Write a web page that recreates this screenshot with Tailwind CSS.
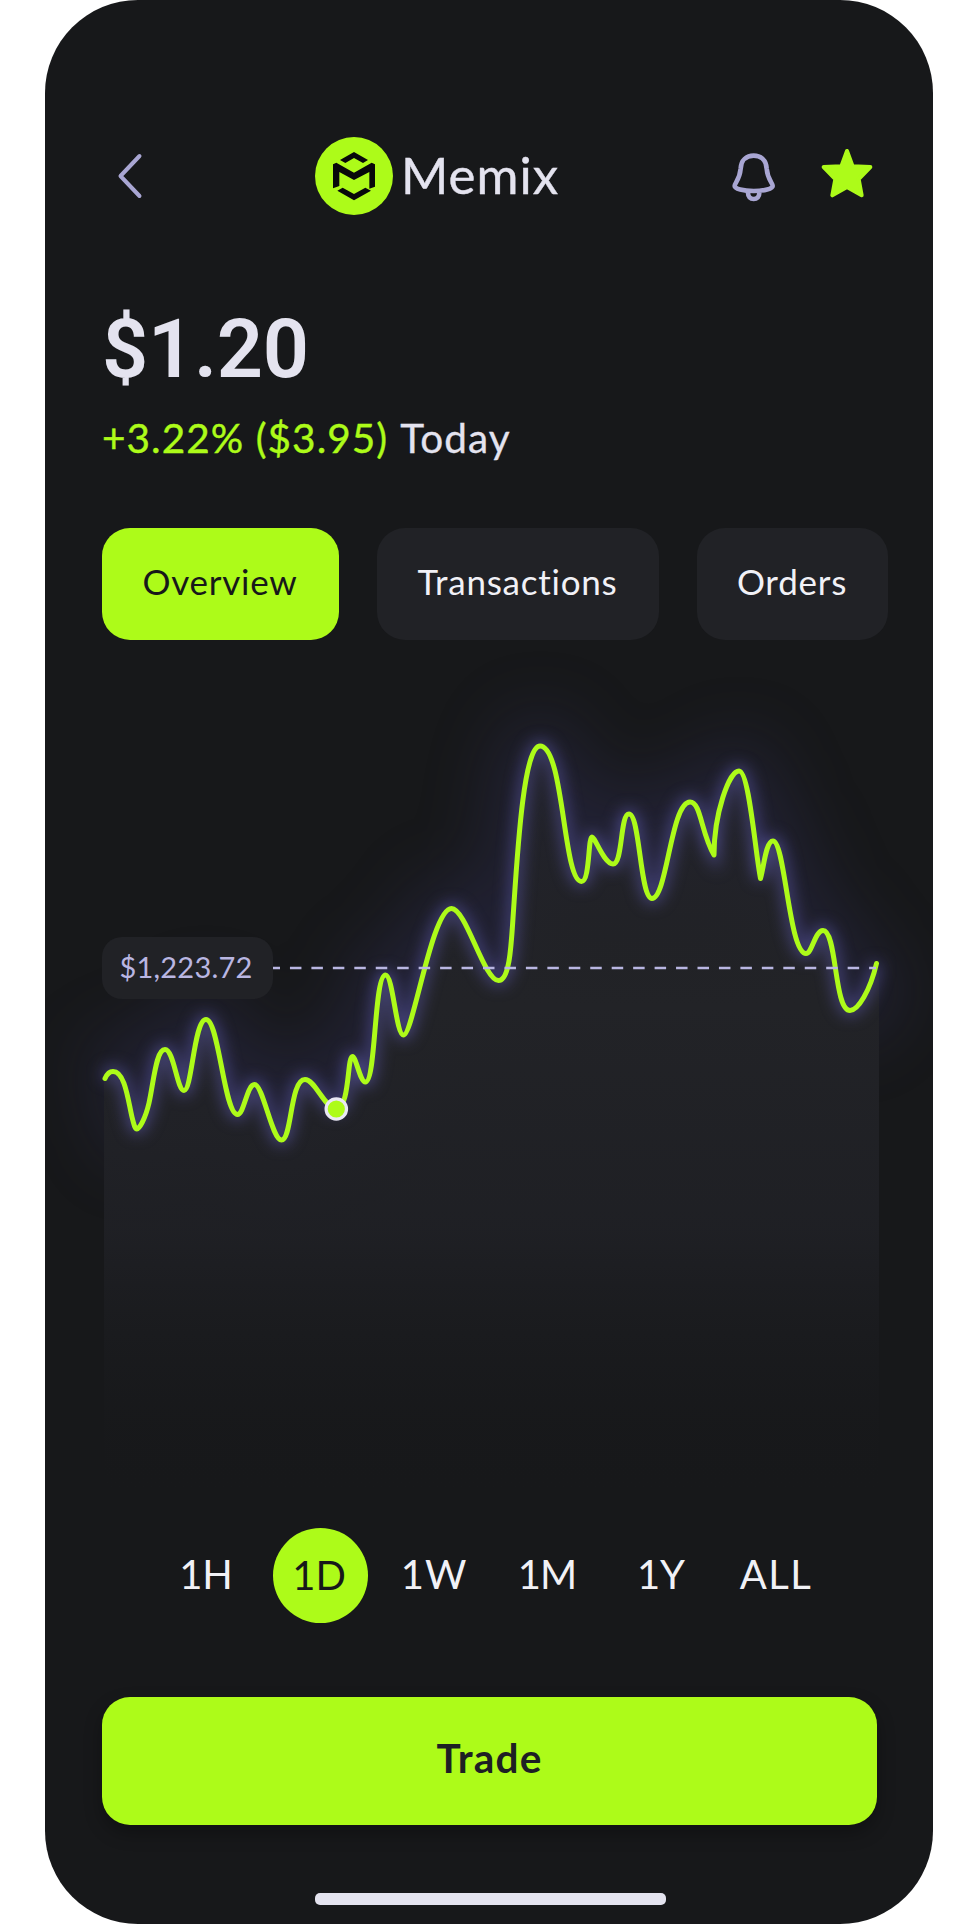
<!DOCTYPE html>
<html lang="en">
<head>
<meta charset="utf-8">
<title>Memix</title>
<script src="https://cdn.jsdelivr.net/npm/@tailwindcss/browser@4"></script>
</head>
<body class="bg-white">
<main class="mx-[45px] flex h-[1924px] w-[888px] flex-col overflow-hidden rounded-[93px] bg-[#17181a] px-[57px] pt-[136.500px] font-['Lato',sans-serif] text-[#e4e3ef]">
  <header class="flex h-[79px] shrink-0 items-center">
    <svg class="ml-[13px] h-[50px] w-[30px]" viewBox="0 0 30 50" fill="none" stroke="#a9a6d3" stroke-width="4" stroke-linecap="round" stroke-linejoin="round"><path d="M24.500 5 5.500 25 24.500 45"/></svg>
    <div class="ml-[170px] flex items-center gap-2">
      <svg class="size-[78px]" viewBox="45 51 234 234"><circle cx="162" cy="168" r="117" fill="#adfb19"/><path d="M162 96 204 120 189 129 162 114 136 129 120 120Z M162 241 213 212 196 203 162 222 128 203 112 212Z M99 133 109 128 162 158 215 128 225 133V200L208 206V156L162 180 118 156V198L99 205Z" fill="#08090a"/></svg>
      <h1 class="w-[160px] pb-[2px] text-[51px] leading-[60px] tracking-[1px] [-webkit-text-stroke:0.4px_#e4e3ef]">Memix</h1>
    </div>
    <svg class="ml-[170px] h-[52px] w-[46px]" viewBox="92 94 138 156" fill="none" stroke="#a9a6d3" stroke-width="14" stroke-linejoin="round"><path d="M103 202C103 192 118 184 121 150C122 124 139 111 160 111C181 111 198 124 199 150C202 184 217 192 217 202C217 210 192 217 160 217C128 217 103 210 103 202Z"/><path d="M143 222C143 234 150 241 160 241C170 241 177 234 177 222"/></svg>
    <svg class="mb-[7px] ml-[43px] h-[52px] w-[54px]" viewBox="360 81 162 156" fill="#adfb19" stroke="#adfb19" stroke-width="12" stroke-linejoin="round"><path d="M441 93 458 139 511 141 476 177 485 226 441 201 397 226 406 177 371 141 424 139Z"/></svg>
  </header>

  <p class="mt-[94px] h-20 shrink-0 font-['Roboto',sans-serif] text-[81px] leading-[80px] font-semibold tracking-[-0.3px]">$1.20</p>
  <p class="mt-[24.500px] flex h-12 shrink-0 gap-[12px] text-[40.500px] leading-[48px] tracking-[1.050px]"><span class="text-[#adfb19] [-webkit-text-stroke:0.4px_#adfb19]">+3.22% ($3.95)</span><span class="[-webkit-text-stroke:0.3px_#e4e3ef]">Today</span></p>

  <nav class="mt-[66px] flex h-[112px] shrink-0 gap-[38px] text-[35px] tracking-[0.750px] text-[#f1f1f6]">
    <a class="flex w-[237px] shrink-0 items-center justify-center rounded-[28px] bg-[#adfb19] pr-[1px] pb-[5px] text-[#17181a]">Overview</a>
    <a class="flex w-[282px] shrink-0 items-center justify-center rounded-[28px] bg-[#212226] pr-[1px] pb-[5px]">Transactions</a>
    <a class="flex w-[191px] shrink-0 items-center justify-center rounded-[28px] bg-[#212226] pr-[1px] pb-[5px]">Orders</a>
  </nav>

  <section class="relative -mx-[57px] h-[888px] shrink-0">
    <svg class="block h-[888px] w-[888px]" viewBox="45 640 888 888" fill="none">
      <defs>
        <linearGradient id="area" gradientUnits="userSpaceOnUse" x1="0" y1="740" x2="0" y2="1500"><stop offset="0" stop-color="#222327" stop-opacity="0.6"/><stop offset="0.35" stop-color="#222327"/><stop offset="0.65" stop-color="#202126" stop-opacity="0.85"/><stop offset="1" stop-color="#17181a" stop-opacity="0"/></linearGradient>
        <filter id="near" filterUnits="userSpaceOnUse" x="45" y="640" width="888" height="888" color-interpolation-filters="sRGB"><feGaussianBlur stdDeviation="8"/></filter>
        <filter id="far" filterUnits="userSpaceOnUse" x="-55" y="540" width="1088" height="988" color-interpolation-filters="sRGB"><feGaussianBlur stdDeviation="34"/></filter>
        <path id="line" d="M105 1078.500C107 1074 110 1071.500 113 1071.500C125 1071.500 128 1100 132 1117C134 1125 135 1129 137 1129C139 1129 145 1120 149 1103C154 1080 156 1049.500 165 1049.500C174 1049.500 177 1090.500 184 1090.500C192 1090.500 194 1019.500 206 1019.500C219 1019.500 224 1114.500 237.500 1114.500C244 1114.500 247 1084.500 254.500 1084.500C263 1084.500 272 1140 281.500 1140C292 1140 290 1079.500 305 1079.500C315 1079.500 324 1107 336 1109C350 1109 347 1056.500 352.500 1056.500C356 1056.500 360 1082 365.500 1082C376 1082 374 975 385.500 975C393 975 396 1035 403.500 1035C413 1035 432 908.500 451.500 908.500C466 908.500 484 980.500 498.500 980.500C509 980.500 511 950 513 918C517 860 523 746 540 746C564 746 563 881.500 581.500 881.500C590 881.500 588 837 592 837C595 837 604 864 613 864C623 864 620 814 629 814C640 814 640 898.500 652 898.500C667 898.500 671 802 690 802C701 802 701 833 714 855C714 814 729 771 739 771C749 771 755 850 760.500 878.500C764 866 766 841 773 841C785 841 789 953.500 806 953.500C812 953.500 815 930.500 823 930.500C837 930.500 834 1010.500 850 1010.500C858 1010.500 870 991 876.500 963.500"/>
      </defs>
      <use href="#line" stroke="#4a4690" stroke-opacity="0.22" stroke-width="60" filter="url(#far)"/>
      <path d="M104 1078.500C107 1074 110 1071.500 113 1071.500C125 1071.500 128 1100 132 1117C134 1125 135 1129 137 1129C139 1129 145 1120 149 1103C154 1080 156 1049.500 165 1049.500C174 1049.500 177 1090.500 184 1090.500C192 1090.500 194 1019.500 206 1019.500C219 1019.500 224 1114.500 237.500 1114.500C244 1114.500 247 1084.500 254.500 1084.500C263 1084.500 272 1140 281.500 1140C292 1140 290 1079.500 305 1079.500C315 1079.500 324 1107 336 1109C350 1109 347 1056.500 352.500 1056.500C356 1056.500 360 1082 365.500 1082C376 1082 374 975 385.500 975C393 975 396 1035 403.500 1035C413 1035 432 908.500 451.500 908.500C466 908.500 484 980.500 498.500 980.500C509 980.500 511 950 513 918C517 860 523 746 540 746C564 746 563 881.500 581.500 881.500C590 881.500 588 837 592 837C595 837 604 864 613 864C623 864 620 814 629 814C640 814 640 898.500 652 898.500C667 898.500 671 802 690 802C701 802 701 833 714 855C714 814 729 771 739 771C749 771 755 850 760.500 878.500C764 866 766 841 773 841C785 841 789 953.500 806 953.500C812 953.500 815 930.500 823 930.500C837 930.500 834 1010.500 850 1010.500C858 1010.500 870 991 879 963.500V1500H104Z" fill="url(#area)"/>
      <use href="#line" stroke="#625fb8" stroke-opacity="0.7" stroke-width="9" filter="url(#near)"/>
      <use href="#line" stroke="#adfb19" stroke-width="5" stroke-linecap="round" stroke-linejoin="round"/>
      <path d="M268.500 968H876" stroke="#b9b6e2" stroke-width="2.400" stroke-dasharray="11.500 9.950"/>
      <circle cx="336.300" cy="1109" r="10.200" fill="#adfb19" stroke="#e9e8f4" stroke-width="3.200"/>
    </svg>
    <div class="absolute top-[297px] left-[57px] flex h-[62px] w-[171px] items-center justify-center rounded-[20px] bg-[#212226] pr-[3px] pb-[2px] text-[29px] tracking-[0.200px] text-[#b9b6e2]">$1,223.72</div>
  </section>

  <div class="ml-[47px] grid h-[95px] w-[684px] shrink-0 grid-cols-6 items-center justify-items-center text-[40px] leading-[48px] text-[#f1f1f6]">
    <span class="pb-[3px]">1H</span>
    <span class="flex size-[95px] items-center justify-center rounded-full bg-[#adfb19] pr-[2px] pb-[1px] text-[#17181a]">1D</span>
    <span class="pb-[3px] tracking-[1px]">1W</span>
    <span class="pr-[2px] pb-[3px] tracking-[-1px]">1M</span>
    <span class="pr-[2px] pb-[3px]">1Y</span>
    <span class="pb-[3px] tracking-[1.500px]">ALL</span>
  </div>

  <button class="mt-[73.500px] flex h-32 w-[775px] shrink-0 items-center justify-center rounded-[28px] bg-[#adfb19] pb-[5px] text-[40.500px] font-bold tracking-[1.200px] text-[#1e1f24] shadow-[0_8px_18px_rgba(0,0,0,0.3)]">Trade</button>
  <div class="mt-[68.500px] ml-[213px] h-3 w-[351px] shrink-0 rounded-[5px] bg-[#e4e3ef]"></div>
</main>
</body>
</html>
